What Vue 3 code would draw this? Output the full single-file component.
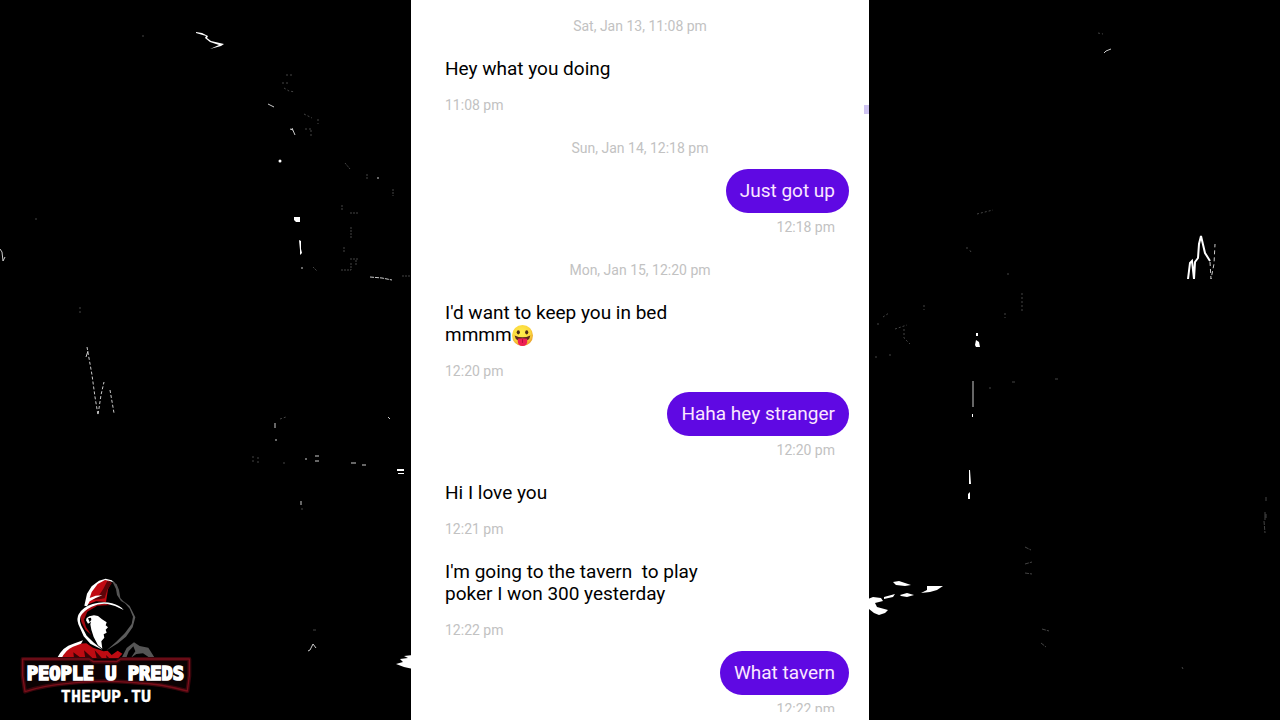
<script setup>
const entries = [
  { type: 'date', text: 'Sat, Jan 13, 11:08 pm' },
  { type: 'in', text: 'Hey what you doing', time: '11:08 pm' },
  { type: 'date', text: 'Sun, Jan 14, 12:18 pm' },
  { type: 'out', text: 'Just got up', time: '12:18 pm' },
  { type: 'date', text: 'Mon, Jan 15, 12:20 pm' },
  { type: 'in', text: "I'd want to keep you in bed\nmmmm", time: '12:20 pm', emoji: true },
  { type: 'out', text: 'Haha hey stranger', time: '12:20 pm' },
  { type: 'in', text: 'Hi I love you', time: '12:21 pm' },
  { type: 'in', text: "I'm going to the tavern  to play\npoker I won 300 yesterday", time: '12:22 pm' },
  { type: 'out', text: 'What tavern', time: '12:22 pm' }
]
</script>

<template>
  <div class="stage">
    <svg class="scratches" viewBox="0 0 1280 720" preserveAspectRatio="xMidYMid slice" aria-hidden="true">
      <g class="bright">
        <path d="M196 32l6 1 6 3-1 2 4 3 13 3-3 2-11 3 9-4-9-3-5-4 1-2-10-3z" />
        <path d="M294 217h6v5h-4l-2-2z" />
        <path d="M299 240l2 1 0 8 1 4-2 2 0-5z" />
        <circle cx="280" cy="161" r="1.5" />
        <path d="M397 469h7v2h-7zM398 473h6v1h-6z" />
        <path d="M396 664l7-2-3-3 8-1-4-2 9-1v14l-9-2z" />
        <path d="M975 345l1-5 3 2 1 5h-4zM976 333h2v3h-2z" />
        <path d="M972 414h1v3h-1z" />
        <path d="M969 470h1l1 14h-2zM968 494l2-2v7h-2z" />
        <path d="M868 599l5-2 8 1 2 3-8 2 2 4 11 3-3 3-6 2-5-2-5-4-1-3z" />
        <path d="M893 582l6-1 12 4-6 1-9-1zM884 597l11-3-2 3-9 2zM900 595l7-2 7 2-7 2-6-1zM927 586l16 0-6 4-7 2-9 1 6-3z" />
      </g>
      <path class="peak" d="M1188 279l2-16 2-2 2 18 1-17 3-4 1-14 2-8 4 17 5 8" />
      <g class="line">
        <path d="M0 249l2 3 1 9 2-4" />
        <path d="M973 381v26" />
        <path d="M87 347l5 28 3 22 3 18 3-20 3-13M110 390l4 23" stroke-dasharray="3 2" />
        <path d="M86 357l2-6" />
        <path d="M1210 262l1 17 3-15 1-20" stroke-dasharray="4 3" />
        <path d="M370 277l12 1 10 2" stroke-dasharray="4 1" />
        <path d="M268 104l4 2 2 1M351 463h5M362 465h4M305 459h2M315 456h4M315 461h4" />
        <path d="M1104 53l2-2 5-2" />
        <path d="M308 651l2-1 3-6 3 4" />
        <path d="M275 423v5M275 440h2M301 501v4" />
        <path d="M293 130l-3-1M292 128l3 7M301 268h2M378 177v2M388 417l2 2" />
      </g>
      <g class="faint">
        <path d="M286 75h6M282 83h8M284 88l5 3 6 1M304 114l8 4M318 119v5M305 129h8M311 130v6" stroke-dasharray="2 2" />
        <path d="M345 163l5 6M367 174v6M393 189v7M350 213l8 0M342 205v5M351 227v12M344 247v5M350 259l9 0M341 270h10v-8M313 267l4 4M356 260v6M402 276h8" stroke-dasharray="2 1" />
        <path d="M253 456v6M258 457v6M280 419l6-2M80 307v6M142 36h4M283 463h3M302 508v2" stroke-dasharray="2 2" />
        <path d="M1098 33l5 1M977 214l16-4M967 247v4M1008 273v3M1022 293v20M1005 313v5M924 305v5M883 317l6-4M878 323v2M895 329l12-4M904 329v9l6 6M875 357h2M889 355h2M971 252l-2-3" stroke-dasharray="2 2" />
        <path d="M990 387v2M1012 382h3M1055 379h3M1266 497v5M1266 514v4M1264 521l1 12M1025 547l6 3M1025 564l7-2M1025 573l7 1M1042 629l7 2M1041 643l5 4" stroke-dasharray="4 1" />
        <path d="M313 630h3M1182 667l1 2M35 219h2M1265 512v8" />
      </g>
    </svg>

    <main class="chat">
      <div class="log">
        <template v-for="(entry, i) in entries" :key="i">
          <p v-if="entry.type === 'date'" class="date">{{ entry.text }}</p>
          <article v-else class="message" :class="entry.type">
            <p class="bubble">{{ entry.text }}<svg v-if="entry.emoji" class="emoji" viewBox="0 0 40 40" role="img" aria-label="Face with tongue out">
                <defs>
                  <radialGradient id="face" cx="45%" cy="38%" r="62%">
                    <stop offset="0" stop-color="#fff04c" />
                    <stop offset="0.7" stop-color="#fbd63d" />
                    <stop offset="1" stop-color="#e89c2b" />
                  </radialGradient>
                </defs>
                <circle cx="20" cy="20" r="20" fill="url(#face)" />
                <ellipse cx="12" cy="14" rx="3" ry="4" fill="#4b2c18" />
                <ellipse cx="28" cy="14" rx="3" ry="4" fill="#4b2c18" />
                <path d="M5 20q15 7 30 0-1 7-6 9H11Q6 27 5 20z" fill="#5b2a1c" />
                <path d="M11 26q9-2 18 0v5q0 9-9 9t-9-9z" fill="#ed1f55" />
                <path d="M20 27v7" stroke="#b4103d" stroke-width="2" />
              </svg></p>
            <time class="time">{{ entry.time }}</time>
          </article>
        </template>
      </div>
      <span class="thumb" aria-hidden="true"></span>
    </main>

    <svg class="logo" viewBox="0 0 570 435" role="img" aria-label="People U Preds, thepup.tu">
      <g transform="translate(180 15)">
        <path d="M52 82l4-26 16-24 22-16 18-1 12 8-10 20-6 38-30-2-30 12z" fill="#c00a12" />
        <path d="M112 18l14 6-14 20-8 26-16 3-22 2 20-12 14-22z" fill="#5c0408" />
        <path d="M43 92l8-36 14-22 22-17 20-6 18 5 10 8-16-6-14-3-22 12-18 24-6 18 18-7 20-1-20 8-18 10-8 15z" fill="#fff" />
        <path d="M126 18l14 10 7 17 4 24 16 17-14-8-12-18-3-18-7-14z" fill="#555" />
        <path d="M44 100l30-14 20-2 28 6-40 2-30 18-10 24 6 22 16 24-18-16-12-24-4-22z" fill="#a3080f" />
        <path d="M161 105q-24-14-48-18-26-3-48 8-26 13-33 29-5 13 2 28l16 30 20 20 27 22-36-18-20-22-16-36q-6-17 1-30 12-22 42-31 32-9 58-2 24 6 35 20z" fill="#fff" />
        <path d="M159 77l20 16 17 34-8 30-20 28-24 20-34 21 28-25 27-27 20-27 4-22-10-24z" fill="#5c5c5c" />
        <path d="M58 124l14-3 12 2 12 10 14 9-3 9 7 6-7 7 3 9-9 5 2 10-9 11 3 22-13-10-13-25-7-22-3-16 2-8-9 6-6-10 2-7z" fill="#fff" />
        <path d="M54 130l9-2 1 7-5 6z" fill="#000" />
        <path d="M49 205l20 13 32 11 12-2 12 13 18-13 14 9-12 14H-30l18-25 28-18z" fill="#bd0b12" />
        <path d="M-39 250q17-36 49-44l29-10-6 10-24 9q-23 10-34 35z" fill="#fff" />
        <path d="M10 232l24 18H12zM42 226l26 24H46zM74 226l22 24H80zM108 240l10 10h-8z" fill="#3a0306" />
        <path d="M155 248l15-29 22-17 17 11 26 5 20 32h-14l-22-15-20 2-16 11 13-19-6-15-14 15-7 19z" fill="#555" />
      </g>
      <path class="glow" d="M38 267H238l12 8h70l12-8H538v50l-6 46q-83-22-145-24l-24-2q-78-6-156 0l-32 3q-70 5-130 25l-7-48z" />
      <path class="frame" d="M38 267H238l12 8h70l12-8H538v50l-6 46q-83-22-145-24l-24-2q-78-6-156 0l-32 3q-70 5-130 25l-7-48z" />
      <text class="brand" x="286" y="331" text-anchor="middle">PEOPLE U PREDS</text>
      <text class="site" x="288" y="396" text-anchor="middle">THEPUP.TU</text>
    </svg>
  </div>
</template>

<style>
body {
  margin: 0;
  background: #000;
}
</style>

<style scoped>
.stage {
  position: relative;
  display: flex;
  justify-content: center;
  height: 100vh;
  overflow: hidden;
  background: #000;
  font-family: Roboto, "Liberation Sans", sans-serif;
}
.scratches {
  position: absolute;
  inset: 0;
  width: 100%;
  height: 100%;
}
.bright {
  fill: #fff;
}
.peak {
  fill: none;
  stroke: #fff;
  stroke-width: 2;
}
.line,
.faint {
  fill: none;
  stroke: #ccc;
  stroke-width: 1;
}
.faint {
  stroke: #444;
}
.chat {
  position: relative;
  box-sizing: border-box;
  width: 100%;
  max-width: 458px;
  padding-bottom: 8px;
  background: #fff;
}
.log {
  box-sizing: border-box;
  height: 100%;
  padding: 18px 20px 0;
  overflow: hidden;
}
.date,
.time {
  font-size: 14px;
  font-weight: 400;
  line-height: 16px;
  color: #c2c2c2;
}
.date {
  margin: 0 0 13px;
  text-align: center;
}
.message {
  display: flex;
  flex-direction: column;
  align-items: flex-start;
  gap: 6px;
  margin-bottom: 13px;
}
.message + .date {
  margin-top: 27px;
}
.bubble {
  margin: 0;
  padding: 11px 14px;
  border-radius: 22px;
  font-size: 19px;
  line-height: 22px;
  white-space: pre-wrap;
  color: #000;
}
.time {
  padding: 0 14px;
}
.out {
  align-items: flex-end;
}
.out .bubble {
  background: #5f09e3;
  color: #fbe6ff;
}
.emoji {
  width: 21px;
  height: 21px;
  margin: -4px 0;
  vertical-align: -1px;
}
.thumb {
  position: absolute;
  top: 105px;
  right: 0;
  width: 5px;
  height: 9px;
  background: #cfc4f2;
}
.logo {
  position: absolute;
  left: 10px;
  bottom: 5px;
  width: 190px;
  height: 145px;
}
.glow,
.frame {
  fill: #0c0203;
  stroke: #3a060c;
  stroke-width: 12px;
  stroke-linejoin: round;
}
.frame {
  fill: none;
  stroke: #7a0f1a;
  stroke-width: 4px;
}
.brand,
.site {
  font-family: "DejaVu Sans Mono", monospace;
  font-weight: 700;
  fill: #fff;
  stroke: #fff;
}
.brand {
  font-size: 56px;
  stroke-width: 5px;
}
.site {
  font-size: 50px;
  stroke-width: 1px;
}
</style>
